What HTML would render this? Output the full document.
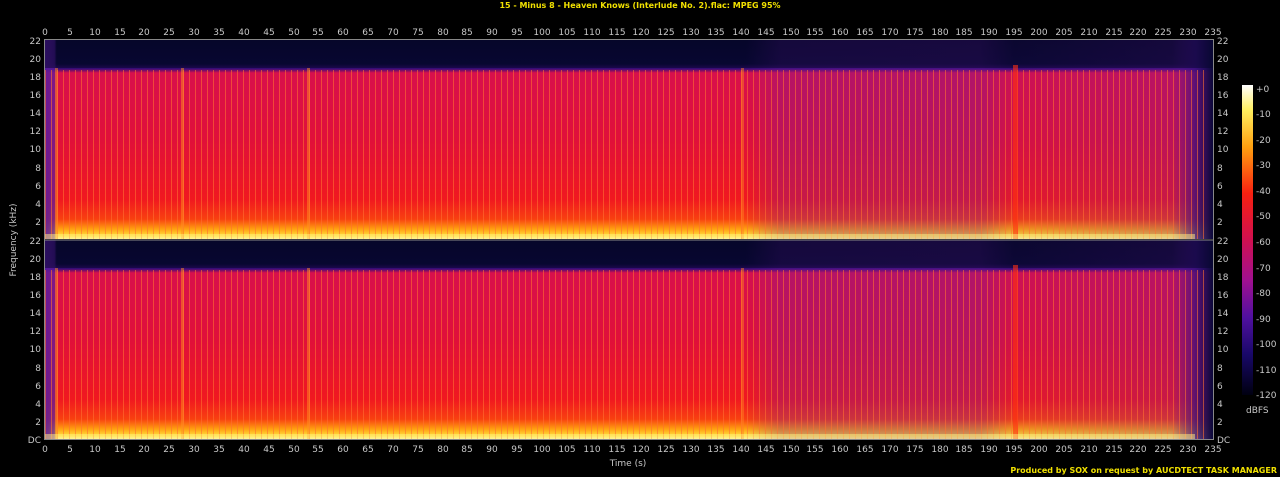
<!DOCTYPE html>
<html><head><meta charset="utf-8"><style>
html,body{margin:0;padding:0;background:#000;width:1280px;height:477px;overflow:hidden}
svg{display:block}
text{font-family:"DejaVu Sans","Liberation Sans",sans-serif;font-size:9px;fill:#c8c8c8}
</style></head><body>
<svg width="1280" height="477" viewBox="0 0 1280 477" xmlns="http://www.w3.org/2000/svg">
<defs>
<linearGradient id="v" x1="0" y1="0" x2="0" y2="1">
<stop offset="0" stop-color="#06062a"/>
<stop offset="0.12" stop-color="#0a0838"/>
<stop offset="0.145" stop-color="#3a0c78"/>
<stop offset="0.165" stop-color="#d8104c"/>
<stop offset="0.5" stop-color="#e0103a"/>
<stop offset="0.8" stop-color="#f01820"/>
<stop offset="0.9" stop-color="#f84010"/>
<stop offset="0.95" stop-color="#ffa010"/>
<stop offset="0.985" stop-color="#ffe040"/>
<stop offset="1" stop-color="#fff8b0"/>
</linearGradient>
<linearGradient id="h" x1="0" y1="0" x2="1" y2="0">
<stop offset="0" stop-color="#5a1aa0" stop-opacity="0.9"/>
<stop offset="0.008" stop-color="#5a1aa0" stop-opacity="0.7"/>
<stop offset="0.01" stop-color="#5a1aa0" stop-opacity="0"/>
<stop offset="0.6" stop-color="#6a1aa0" stop-opacity="0"/>
<stop offset="0.63" stop-color="#6a1aa0" stop-opacity="0.3"/>
<stop offset="0.8" stop-color="#6a1aa0" stop-opacity="0.35"/>
<stop offset="0.83" stop-color="#6a1aa0" stop-opacity="0.1"/>
<stop offset="0.965" stop-color="#6a1aa0" stop-opacity="0.3"/>
<stop offset="0.985" stop-color="#3a1080" stop-opacity="0.8"/>
<stop offset="1" stop-color="#0a0838" stop-opacity="1"/>
</linearGradient>
<pattern id="st" patternUnits="userSpaceOnUse" width="6" height="10">
<rect x="0" y="0" width="1" height="10" fill="#ff7030" opacity="0.6"/>
</pattern>
<linearGradient id="cb" x1="0" y1="0" x2="0" y2="1">
<stop offset="0" stop-color="#ffffff"/>
<stop offset="0.08" stop-color="#fff060"/>
<stop offset="0.2" stop-color="#ffa010"/>
<stop offset="0.35" stop-color="#f82010"/>
<stop offset="0.5" stop-color="#d01050"/>
<stop offset="0.63" stop-color="#a01090"/>
<stop offset="0.75" stop-color="#5010a0"/>
<stop offset="0.87" stop-color="#180868"/>
<stop offset="1" stop-color="#000010"/>
</linearGradient>
<g id="panel">
<rect x="0" y="0" width="1168" height="199" fill="url(#v)"/>
<rect x="0" y="0" width="1168" height="199" fill="url(#h)"/>
<rect x="0" y="30" width="1160" height="169" fill="url(#st)"/>
<rect x="0" y="0" width="1168" height="28" fill="#06062a" opacity="0.5"/>
<rect x="10" y="28" width="3" height="171" fill="#ff9020" opacity="0.5"/>
<rect x="136" y="28" width="3" height="171" fill="#ff9020" opacity="0.5"/>
<rect x="262" y="28" width="3" height="171" fill="#ff9020" opacity="0.5"/>
<rect x="696" y="28" width="3" height="171" fill="#ff8020" opacity="0.5"/>
<rect x="968" y="25" width="5" height="174" fill="#ff3010" opacity="0.6"/>
<rect x="0" y="194" width="1150" height="5" fill="#fff080" opacity="0.5"/>
</g>
</defs>
<text x="640" y="8" text-anchor="middle" style="fill:#f0e000;font-size:8px;font-weight:bold">15 - Minus 8 - Heaven Knows (Interlude No. 2).flac: MPEG 95%</text>
<use href="#panel" x="45" y="40"/>
<use href="#panel" x="45" y="240"/>
<rect x="44.5" y="39.5" width="1169" height="400" fill="none" stroke="#888" stroke-width="1"/>
<line x1="45" y1="240" x2="1213" y2="240" stroke="#888"/>
<g text-anchor="middle">
<text x="45" y="35">0</text><text x="70" y="35">5</text><text x="95" y="35">10</text><text x="120" y="35">15</text><text x="144" y="35">20</text><text x="169" y="35">25</text><text x="194" y="35">30</text><text x="219" y="35">35</text><text x="244" y="35">40</text><text x="269" y="35">45</text><text x="294" y="35">50</text><text x="318" y="35">55</text><text x="343" y="35">60</text><text x="368" y="35">65</text><text x="393" y="35">70</text><text x="418" y="35">75</text><text x="443" y="35">80</text><text x="467" y="35">85</text><text x="492" y="35">90</text><text x="517" y="35">95</text><text x="542" y="35">100</text><text x="567" y="35">105</text><text x="592" y="35">110</text><text x="617" y="35">115</text><text x="641" y="35">120</text><text x="666" y="35">125</text><text x="691" y="35">130</text><text x="716" y="35">135</text><text x="741" y="35">140</text><text x="766" y="35">145</text><text x="791" y="35">150</text><text x="815" y="35">155</text><text x="840" y="35">160</text><text x="865" y="35">165</text><text x="890" y="35">170</text><text x="915" y="35">175</text><text x="940" y="35">180</text><text x="964" y="35">185</text><text x="989" y="35">190</text><text x="1014" y="35">195</text><text x="1039" y="35">200</text><text x="1064" y="35">205</text><text x="1089" y="35">210</text><text x="1114" y="35">215</text><text x="1138" y="35">220</text><text x="1163" y="35">225</text><text x="1188" y="35">230</text><text x="1213" y="35">235</text>
</g>
<g text-anchor="middle">
<text x="45" y="452">0</text><text x="70" y="452">5</text><text x="95" y="452">10</text><text x="120" y="452">15</text><text x="144" y="452">20</text><text x="169" y="452">25</text><text x="194" y="452">30</text><text x="219" y="452">35</text><text x="244" y="452">40</text><text x="269" y="452">45</text><text x="294" y="452">50</text><text x="318" y="452">55</text><text x="343" y="452">60</text><text x="368" y="452">65</text><text x="393" y="452">70</text><text x="418" y="452">75</text><text x="443" y="452">80</text><text x="467" y="452">85</text><text x="492" y="452">90</text><text x="517" y="452">95</text><text x="542" y="452">100</text><text x="567" y="452">105</text><text x="592" y="452">110</text><text x="617" y="452">115</text><text x="641" y="452">120</text><text x="666" y="452">125</text><text x="691" y="452">130</text><text x="716" y="452">135</text><text x="741" y="452">140</text><text x="766" y="452">145</text><text x="791" y="452">150</text><text x="815" y="452">155</text><text x="840" y="452">160</text><text x="865" y="452">165</text><text x="890" y="452">170</text><text x="915" y="452">175</text><text x="940" y="452">180</text><text x="964" y="452">185</text><text x="989" y="452">190</text><text x="1014" y="452">195</text><text x="1039" y="452">200</text><text x="1064" y="452">205</text><text x="1089" y="452">210</text><text x="1114" y="452">215</text><text x="1138" y="452">220</text><text x="1163" y="452">225</text><text x="1188" y="452">230</text><text x="1213" y="452">235</text>
</g>
<text x="628" y="466" text-anchor="middle">Time (s)</text>
<text x="0" y="0" transform="translate(16,240) rotate(-90)" text-anchor="middle">Frequency (kHz)</text>
<g text-anchor="end">
<text x="41" y="44">22</text><text x="41" y="62">20</text><text x="41" y="80">18</text><text x="41" y="98">16</text><text x="41" y="116">14</text><text x="41" y="134">12</text><text x="41" y="152">10</text><text x="41" y="171">8</text><text x="41" y="189">6</text><text x="41" y="207">4</text><text x="41" y="225">2</text>
<text x="41" y="244">22</text><text x="41" y="262">20</text><text x="41" y="280">18</text><text x="41" y="298">16</text><text x="41" y="316">14</text><text x="41" y="334">12</text><text x="41" y="352">10</text><text x="41" y="371">8</text><text x="41" y="389">6</text><text x="41" y="407">4</text><text x="41" y="425">2</text><text x="41" y="443">DC</text>
</g>
<g>
<text x="1217" y="44">22</text><text x="1217" y="62">20</text><text x="1217" y="80">18</text><text x="1217" y="98">16</text><text x="1217" y="116">14</text><text x="1217" y="134">12</text><text x="1217" y="152">10</text><text x="1217" y="171">8</text><text x="1217" y="189">6</text><text x="1217" y="207">4</text><text x="1217" y="225">2</text>
<text x="1217" y="244">22</text><text x="1217" y="262">20</text><text x="1217" y="280">18</text><text x="1217" y="298">16</text><text x="1217" y="316">14</text><text x="1217" y="334">12</text><text x="1217" y="352">10</text><text x="1217" y="371">8</text><text x="1217" y="389">6</text><text x="1217" y="407">4</text><text x="1217" y="425">2</text><text x="1217" y="443">DC</text>
</g>
<rect x="1242" y="85" width="11" height="310" fill="url(#cb)"/>
<g>
<text x="1256" y="92">+0</text><text x="1256" y="117">-10</text><text x="1256" y="143">-20</text><text x="1256" y="168">-30</text><text x="1256" y="194">-40</text><text x="1256" y="219">-50</text><text x="1256" y="245">-60</text><text x="1256" y="271">-70</text><text x="1256" y="296">-80</text><text x="1256" y="322">-90</text><text x="1256" y="347">-100</text><text x="1256" y="373">-110</text><text x="1256" y="398">-120</text>
<text x="1246" y="413">dBFS</text>
</g>
<text x="1277" y="473" text-anchor="end" style="fill:#f0e000;font-size:8px;font-weight:bold">Produced by SOX on request by AUCDTECT TASK MANAGER</text>
</svg>
</body></html>
